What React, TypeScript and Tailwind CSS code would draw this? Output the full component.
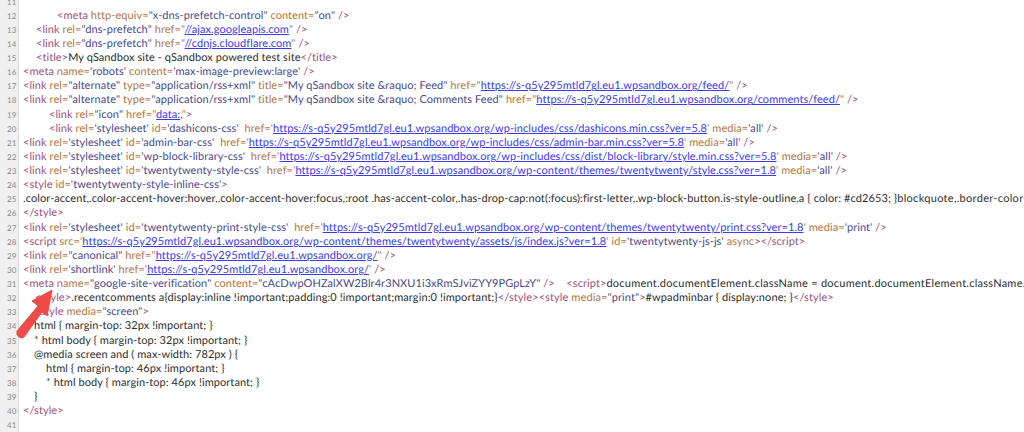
const tag = "text-[#a0527f]";
const attr = "text-[#b5763f]";
const val = "text-[#4a4a8c]";
const txt = "text-[#2f2f2f]";
const url = "text-[#3b3bee] underline";

type Seg = [string, string];

// shorthand builders for the source view tokens
const t = (s: string): Seg => [tag, s];
const a = (s: string): Seg => [attr, s];
const v = (s: string): Seg => [val, s];
const x = (s: string): Seg => [txt, s];
const u = (s: string): Seg => [url, s];

const base = "https://s-q5y295mtld7gl.eu1.wpsandbox.org";

const lines: { n: number; indent?: string; segs: Seg[] }[] = [
  { n: 11, segs: [] },
  { n: 12, indent: "pl-[38px]", segs: [t("<meta "), a("http-equiv="), v('"x-dns-prefetch-control" '), a("content="), v('"on" '), t("/>")] },
  { n: 13, indent: "pl-[17px]", segs: [t("<link "), a("rel="), v('"dns-prefetch" '), a('href="'), u("//ajax.googleapis.com"), a('" '), t("/>")] },
  { n: 14, indent: "pl-[17px]", segs: [t("<link "), a("rel="), v('"dns-prefetch" '), a('href="'), u("//cdnjs.cloudflare.com"), a('" '), t("/>")] },
  { n: 15, indent: "pl-[17px]", segs: [t("<title>"), x("My qSandbox site - qSandbox powered test site"), t("</title>")] },
  { n: 16, segs: [t("<meta "), a("name="), v("'robots' "), a("content="), v("'max-image-preview:large' "), t("/>")] },
  { n: 17, segs: [t("<link "), a("rel="), v('"alternate" '), a("type="), v('"application/rss+xml" '), a("title="), v('"My qSandbox site &raquo; Feed" '), a('href="'), u(`${base}/feed/`), a('" '), t("/>")] },
  { n: 18, segs: [t("<link "), a("rel="), v('"alternate" '), a("type="), v('"application/rss+xml" '), a("title="), v('"My qSandbox site &raquo; Comments Feed" '), a('href="'), u(`${base}/comments/feed/`), a('" '), t("/>")] },
  { n: 19, indent: "pl-[30px]", segs: [t("<link "), a("rel="), v('"icon" '), a('href="'), u("data:,"), a('"'), t(">")] },
  { n: 20, indent: "pl-[30px]", segs: [t("<link "), a("rel="), v("'stylesheet' "), a("id="), v("'dashicons-css'  "), a("href='"), u(`${base}/wp-includes/css/dashicons.min.css?ver=5.8`), a("' media="), v("'all' "), t("/>")] },
  { n: 21, segs: [t("<link "), a("rel="), v("'stylesheet' "), a("id="), v("'admin-bar-css'  "), a("href='"), u(`${base}/wp-includes/css/admin-bar.min.css?ver=5.8`), a("' media="), v("'all' "), t("/>")] },
  { n: 22, segs: [t("<link "), a("rel="), v("'stylesheet' "), a("id="), v("'wp-block-library-css'  "), a("href='"), u(`${base}/wp-includes/css/dist/block-library/style.min.css?ver=5.8`), a("' media="), v("'all' "), t("/>")] },
  { n: 23, segs: [t("<link "), a("rel="), v("'stylesheet' "), a("id="), v("'twentytwenty-style-css'  "), a("href='"), u(`${base}/wp-content/themes/twentytwenty/style.css?ver=1.8`), a("' media="), v("'all' "), t("/>")] },
  { n: 24, segs: [t("<style "), a("id="), v("'twentytwenty-style-inline-css'"), t(">")] },
  { n: 25, indent: "pl-[4px] tracking-[0.09px]", segs: [x(".color-accent,.color-accent-hover:hover,.color-accent-hover:focus,:root .has-accent-color,.has-drop-cap:not(:focus):first-letter,.wp-block-button.is-style-outline,a { color: #cd2653; }"), ["text-[#2f2f2f] tracking-[0.3px]", "blockquote,.border-color-accent"]] },
  { n: 26, segs: [t("</style>")] },
  { n: 27, segs: [t("<link "), a("rel="), v("'stylesheet' "), a("id="), v("'twentytwenty-print-style-css'  "), a("href='"), u(`${base}/wp-content/themes/twentytwenty/print.css?ver=1.8`), a("' media="), v("'print' "), t("/>")] },
  { n: 28, segs: [t("<script "), a("src='"), u(`${base}/wp-content/themes/twentytwenty/assets/js/index.js?ver=1.8`), a("' id="), v("'twentytwenty-js-js' "), a("async"), t("></script>")] },
  { n: 29, segs: [t("<link "), a("rel="), v('"canonical" '), a('href="'), u(`${base}/`), a('" '), t("/>")] },
  { n: 30, segs: [t("<link "), a("rel="), v("'shortlink' "), a("href='"), u(`${base}/`), a("' "), t("/>")] },
  { n: 31, segs: [t("<meta "), a("name="), v('"google-site-verification" '), a("content="), v('"cAcDwpOHZalXW2Blr4r3NXU1i3xRmSJviZYY9PGpLzY" '), t("/>"), x("    "), t("<script>"), ["text-[#2f2f2f] tracking-[0.25px]", "document.documentElement.className = document.documentElement.className.replace"]] },
  { n: 32, indent: "pl-[16px] tracking-[0.1px]", segs: [t("<style>"), x(".recentcomments a{display:inline !important;padding:0 !important;margin:0 !important;}"), t("</style><style "), a("media="), v('"print"'), t(">"), x("#wpadminbar { display:none; }"), t("</style>")] },
  { n: 33, indent: "pl-[15px]", segs: [t("<style "), a("media="), v('"screen"'), t(">")] },
  { n: 34, indent: "pl-[15px]", segs: [x("html { margin-top: 32px !important; }")] },
  { n: 35, indent: "pl-[15px]", segs: [x("* html body { margin-top: 32px !important; }")] },
  { n: 36, indent: "pl-[15px]", segs: [x("@media screen and ( max-width: 782px ) {")] },
  { n: 37, indent: "pl-[27px]", segs: [x("html { margin-top: 46px !important; }")] },
  { n: 38, indent: "pl-[27px]", segs: [x("* html body { margin-top: 46px !important; }")] },
  { n: 39, indent: "pl-[15px]", segs: [x("}")] },
  { n: 40, segs: [t("</style>")] },
  { n: 41, segs: [] },
];

const App = () => {
  return (
    <div className="relative h-screen overflow-hidden bg-white font-['Lato',sans-serif] text-[11px] leading-[14.125px] tracking-[0.07px] [text-rendering:geometricPrecision]">
      <div className="-mt-[5.5px]">
        {lines.map((line) => (
          <div className="flex h-[14.125px]" key={line.n}>
            <div className="w-[19px] shrink-0 border-r border-[#dcdcdc] bg-[#f0f0f0] pl-[7px] text-[8px] tracking-normal text-[#8a8a8a]">
              {line.n}
            </div>
            <div className={`whitespace-pre ${line.indent ?? "pl-[4px]"}`}>
              {line.segs.map((seg, i) => (
                <span className={seg[0]} key={i}>
                  {seg[1]}
                </span>
              ))}
            </div>
          </div>
        ))}
      </div>
      <svg className="absolute left-[14px] top-[288px]" width="42" height="54" viewBox="0 0 42 54">
        <path
          d="M38 2 L18 13 L24 18 L3 43 Q2 47 5 49 Q7 51 10 49 L28 24 L33 28 Z"
          fill="#ee4a4a"
          stroke="#ee4a4a"
          strokeLinejoin="round"
        />
      </svg>
    </div>
  );
};

export default App;
